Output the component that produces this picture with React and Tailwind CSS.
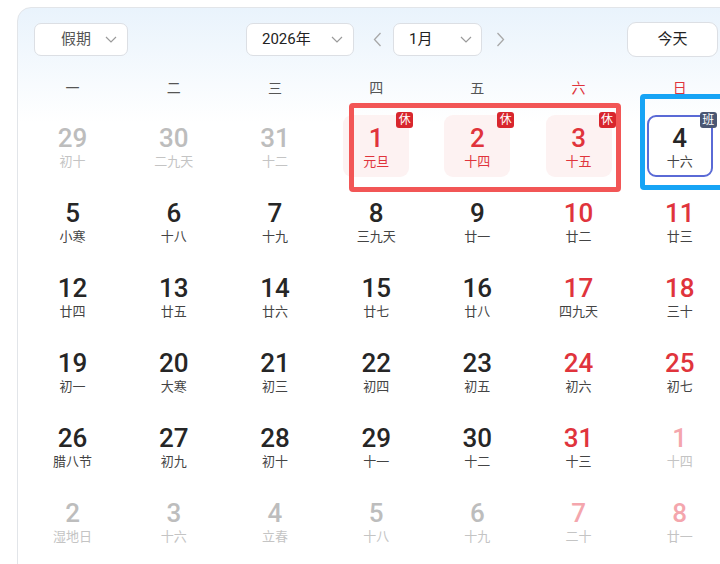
import React from 'react';

const FONT = { fontFamily: 'Roboto, "Noto Sans CJK SC", "Noto Sans", sans-serif' };

// kind: 'out' prev/next month gray, 'outRed' next month weekend, 'hol' holiday rest day, 'work' adjusted work day, 'red' weekend
const ROWS = [
  [['29', '初十', 'out'], ['30', '二九天', 'out'], ['31', '十二', 'out'], ['1', '元旦', 'hol'], ['2', '十四', 'hol'], ['3', '十五', 'hol'], ['4', '十六', 'work']],
  [['5', '小寒'], ['6', '十八'], ['7', '十九'], ['8', '三九天'], ['9', '廿一'], ['10', '廿二', 'red'], ['11', '廿三', 'red']],
  [['12', '廿四'], ['13', '廿五'], ['14', '廿六'], ['15', '廿七'], ['16', '廿八'], ['17', '四九天', 'red'], ['18', '三十', 'red']],
  [['19', '初一'], ['20', '大寒'], ['21', '初三'], ['22', '初四'], ['23', '初五'], ['24', '初六', 'red'], ['25', '初七', 'red']],
  [['26', '腊八节'], ['27', '初九'], ['28', '初十'], ['29', '十一'], ['30', '十二'], ['31', '十三', 'red'], ['1', '十四', 'outRed']],
  [['2', '湿地日', 'out'], ['3', '十六', 'out'], ['4', '立春', 'out'], ['5', '十八', 'out'], ['6', '十九', 'out'], ['7', '二十', 'outRed'], ['8', '廿一', 'outRed']],
];

const WEEK = ['一', '二', '三', '四', '五', '六', '日'];

function Chevron() {
  return (
    <svg width="12" height="7" viewBox="0 0 12 7" fill="none">
      <polyline points="1,1 6,6 11,1" stroke="#9a9a9a" strokeWidth="1.2" />
    </svg>
  );
}

function Arrow({ right }) {
  return (
    <svg width="9" height="15" viewBox="0 0 9 15" fill="none">
      <polyline points={right ? '1.5,1 7.5,7.5 1.5,14' : '7.5,1 1.5,7.5 7.5,14'} stroke="#a8a8a8" strokeWidth="1.3" />
    </svg>
  );
}

function Select({ label, className, textClass }) {
  return (
    <div className={`h-[33px] flex items-center justify-between bg-white border border-[#dcdfe4] rounded-[7px] ${className}`}>
      <span className={`text-[15px] ${textClass}`}>{label}</span>
      <Chevron />
    </div>
  );
}

function Cell({ day }) {
  const [num, lunar, kind] = day;
  let numColor = 'text-[#262626]';
  let lunarColor = 'text-[#444]';
  if (kind === 'out') { numColor = 'text-[#bdbdbd]'; lunarColor = 'text-[#c4c4c4]'; }
  if (kind === 'outRed') { numColor = 'text-[#f4a6ad]'; lunarColor = 'text-[#c4c4c4]'; }
  if (kind === 'red') numColor = 'text-[#e0343c]';
  if (kind === 'hol') { numColor = 'text-[#e0343c]'; lunarColor = 'text-[#e0343c]'; }

  let box = '';
  if (kind === 'hol') box = 'bg-[#fdf2f2]';
  if (kind === 'work') box = 'border-2 border-[#5a6ad6] bg-white';

  return (
    <div className="h-[75px] flex items-center justify-center">
      <div className={`relative w-[66px] h-[62px] rounded-[9px] flex flex-col items-center ${box}`}>
        <div className={`${kind === 'work' ? 'pt-[8px]' : 'pt-[10px]'} text-[26px] leading-[26px] font-medium ${numColor}`}>{num}</div>
        <div className={`mt-[3px] text-[13px] leading-[16px] ${lunarColor}`}>{lunar}</div>
        {kind === 'hol' && (
          <div className="absolute -top-[3px] -right-[4px] w-[17px] h-[16px] rounded-[3px] bg-[#d8262d] text-white text-[12px] leading-[16px] text-center">休</div>
        )}
        {kind === 'work' && (
          <div className="absolute -top-[5px] -right-[6px] w-[17px] h-[16px] rounded-[3px] bg-[#4a5672] text-white text-[12px] leading-[16px] text-center">班</div>
        )}
      </div>
    </div>
  );
}

export default function App() {
  return (
    <div className="relative w-[720px] h-[564px] overflow-hidden bg-white" style={FONT}>
      <div className="ml-[17px] mt-[7px] w-[740px] h-[600px] rounded-[14px] border border-[#e2e5e9] bg-[linear-gradient(180deg,#e9f3fc_0px,#ffffff_115px)]">
        <div className="flex items-center pt-[14px] pl-[16px] h-[49px]">
          <Select label="假期" className="w-[94px] pl-[26px] pr-[10px]" textClass="text-[#555]" />
          <Select label="2026年" className="ml-[118px] w-[108px] pl-[15px] pr-[10px]" textClass="text-[#222]" />
          <div className="ml-[19px]"><Arrow /></div>
          <Select label="1月" className="ml-[11px] w-[89px] pl-[15px] pr-[9px]" textClass="text-[#222]" />
          <div className="ml-[14px]"><Arrow right /></div>
          <div className="ml-[122px] w-[91px] h-[35px] flex items-center justify-center bg-white border border-[#dcdfe4] rounded-[9px] text-[15px] text-[#222]">今天</div>
        </div>
        <div className="pl-[4px] mt-[17px] grid grid-cols-[repeat(7,101.2px)]">
          {WEEK.map((w, i) => (
            <div key={w} className={`h-[28px] flex items-center justify-center text-[14px] ${i >= 5 ? 'text-[#e0343c]' : 'text-[#555]'}`}>{w}</div>
          ))}
        </div>
        <div className="pl-[4px] mt-[6px] grid grid-cols-[repeat(7,101.2px)]">
          {ROWS.flat().map((d, i) => <Cell key={i} day={d} />)}
        </div>
      </div>
      <div className="absolute left-[349px] top-[103px] w-[272px] h-[89px] border-[5px] border-[#f25656] rounded-[4px]" />
      <div className="absolute left-[640px] top-[94px] w-[95px] h-[96px] border-[5px] border-[#17a4f5] rounded-[4px]" />
    </div>
  );
}
